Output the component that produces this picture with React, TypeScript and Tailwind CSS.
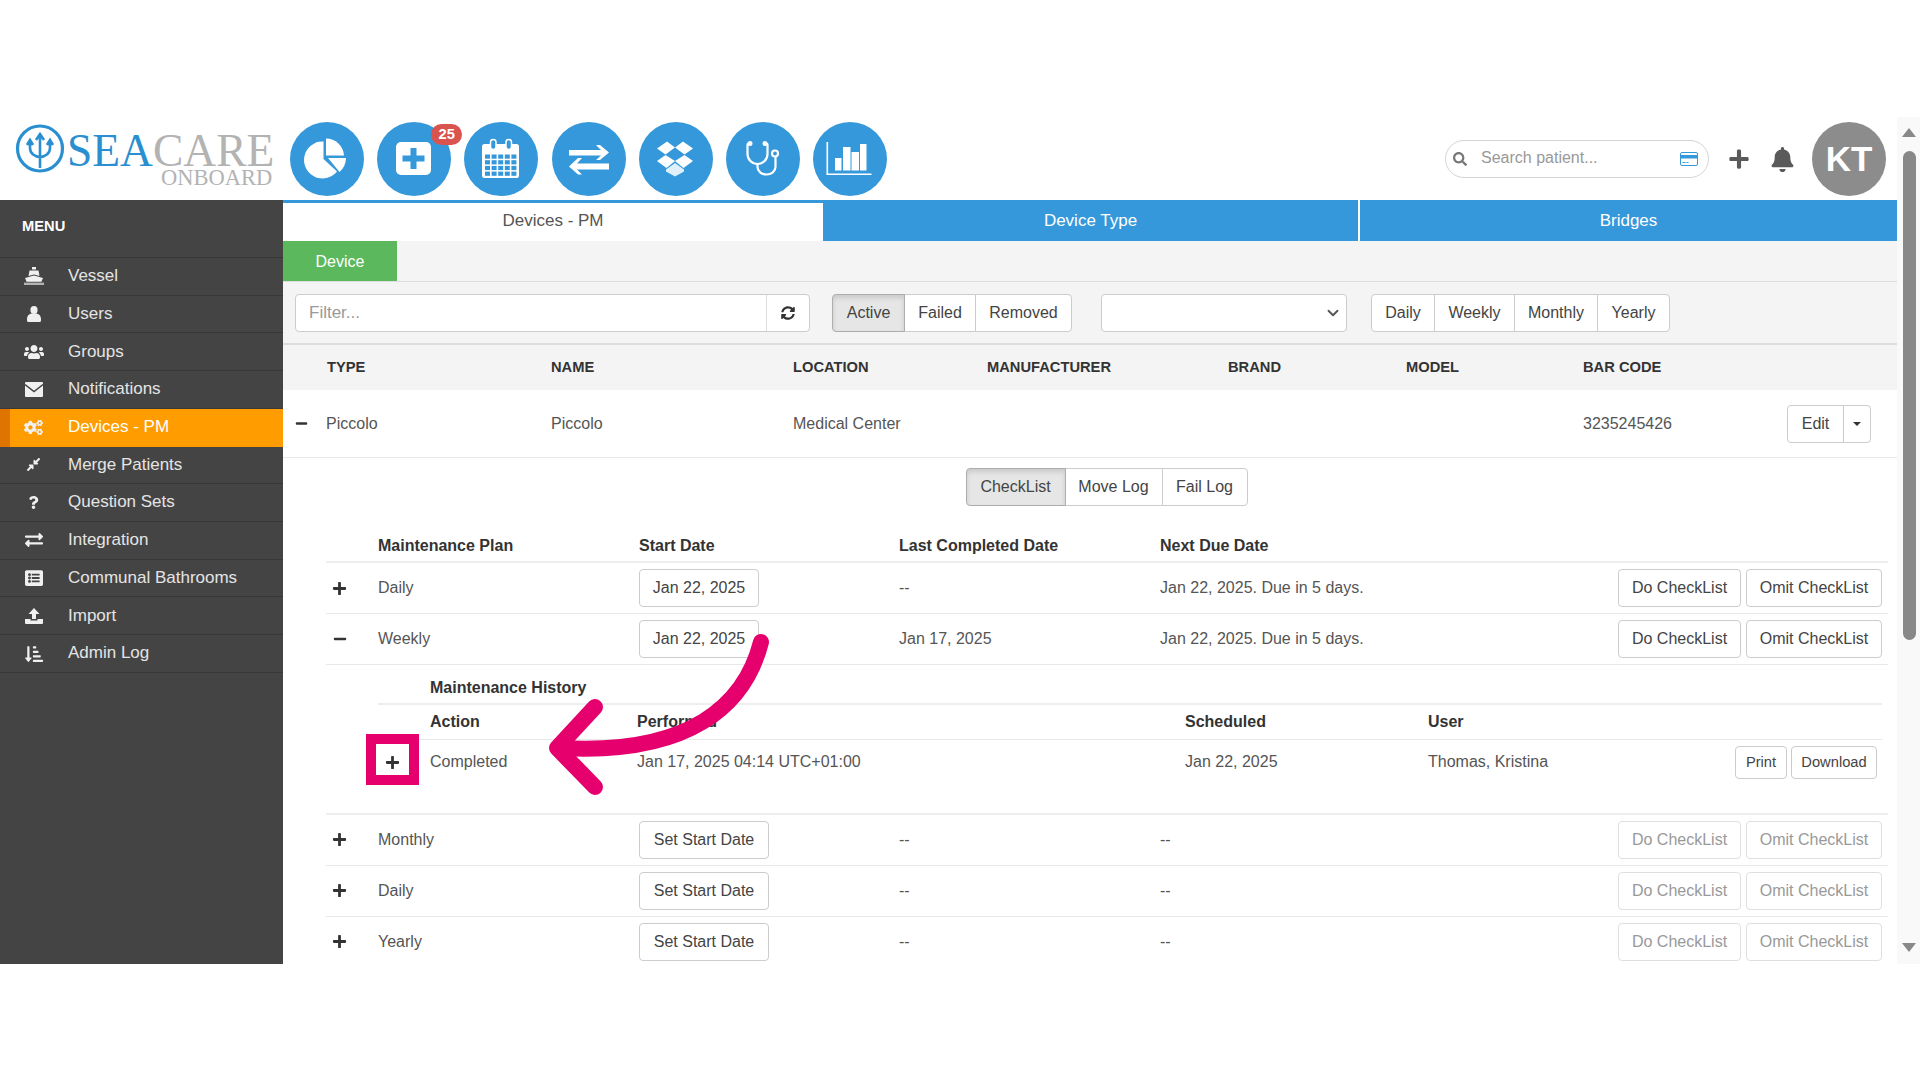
import type { ReactNode } from "react";
import { ChevronDown } from "lucide-react";
import {
  FaBell,
  FaCogs,
  FaCompressAlt,
  FaExchangeAlt,
  FaListAlt,
  FaMinus,
  FaPlus,
  FaQuestion,
  FaSearch,
  FaSortAmountDownAlt,
  FaSyncAlt,
  FaUsers,
} from "react-icons/fa";

function VesselIcon() {
  return (
    <svg width="20" height="18" viewBox="0 0 20 18" fill="currentColor">
      <path d="M8 0h4v2.5H8zM5.5 3.5h9l1 5.5-5.5-1.6L4.5 9z" />
      <path d="M10 8.5 19 11l-1.6 3.8H2.6L1 11z" />
      <path d="M0 15.6h20V18H0z" opacity=".65" />
    </svg>
  );
}

function UserIcon() {
  return (
    <svg width="14" height="16" viewBox="0 0 14 16" fill="currentColor">
      <ellipse cx="7" cy="4" rx="3.6" ry="4" />
      <path d="M0 13c0-3 1.800-4.800 4.200-5.400h5.600C12.200 8.200 14 10 14 13v1.500a1.500 1.500 0 0 1-1.500 1.500h-11A1.500 1.500 0 0 1 0 14.500z" />
    </svg>
  );
}

function EnvelopeIcon() {
  return (
    <svg width="18" height="15" viewBox="0 0 18 15">
      <rect width="18" height="15" rx="1" fill="currentColor" />
      <path d="M0 2.500 9 9.500l9-7" fill="none" stroke="#444" strokeWidth="1.500" />
    </svg>
  );
}

function ImportIcon() {
  return (
    <svg width="18" height="16" viewBox="0 0 18 16" fill="currentColor">
      <path d="M9 0l5.500 6H11v5H7V6H3.500z" />
      <path d="M0 11h5.500v1.500h7V11H18v4a1 1 0 0 1-1 1H1a1 1 0 0 1-1-1z" />
    </svg>
  );
}

function PieIcon() {
  return (
    <g fill="#fff">
      <path d="M33.500 19.500V37L47 49.500A18.500 18.500 0 1 1 33.500 19.500Z" />
      <path d="M36 16.500A18 18 0 0 1 54 33.500H36Z" />
      <path d="M38 36H56A19 19 0 0 1 49.500 50Z" />
    </g>
  );
}

function PlusSquareIcon() {
  return (
    <g>
      <rect x="19" y="20" width="35" height="33" rx="5" fill="#fff" />
      <path d="M33.500 26h6v7.500h8v6h-8V47h-6v-7.500h-8v-6h8z" fill="#3498db" />
    </g>
  );
}

function CalendarIcon() {
  const xs = [21, 27.600, 34.200, 40.800, 47.400];
  const ys = [32.500, 38.200, 43.900, 49.600];
  return (
    <g>
      <rect x="18" y="22" width="37" height="34" rx="2.500" fill="#fff" />
      {xs.map((x) =>
        ys.map((y) => <rect key={`${x}-${y}`} x={x} y={y} width="5" height="4.200" fill="#3498db" />),
      )}
      <rect x="26.500" y="17.500" width="5.500" height="10" rx="2.700" fill="#3498db" stroke="#fff" strokeWidth="1.500" />
      <rect x="42" y="17.500" width="5.500" height="10" rx="2.700" fill="#3498db" stroke="#fff" strokeWidth="1.500" />
    </g>
  );
}

function ExchangeIcon() {
  return (
    <g fill="#fff">
      <polygon points="17,28 49,28 44,23 48,23 57,30.500 48,38 44,38 49,33.500 17,33.500" />
      <polygon points="57,41.500 25,41.500 30,36 26,36 17,44.500 26,52.500 30,52.500 25,47.500 57,47.500" />
    </g>
  );
}

function DropboxIcon() {
  return (
    <g fill="#fff">
      <polygon points="18,26.500 28,19.500 36,25.500 26.500,32.500" />
      <polygon points="36,25.500 44,19.500 54,26.500 45.500,32.500" />
      <polygon points="18,39 26.500,33 36,39 27.500,46" />
      <polygon points="36,39 45.500,33 54,39 44.500,46" />
      <polygon points="27,47.500 36,41 45,47.500 45,49.500 36,54.500 27,49.500" opacity=".85" />
    </g>
  );
}

function StethoscopeIcon() {
  return (
    <g fill="none" stroke="#fff" strokeWidth="2.200">
      <path d="M24 21.500h-1.500a1 1 0 0 0-1 1V32a10 10 0 0 0 20 0v-9.500a1 1 0 0 0-1-1H39" />
      <path d="M31.500 42v3a9 7.500 0 0 0 18 0V35" />
      <circle cx="49" cy="31.500" r="3" fill="#3498db" />
      <circle cx="24" cy="21.500" r="1.400" fill="#fff" />
      <circle cx="39" cy="21.500" r="1.400" fill="#fff" />
    </g>
  );
}

function BarsIcon() {
  return (
    <g fill="#fff">
      <path d="M13.500 20h1.600v31.400h43.400V53h-45z" />
      <rect x="22" y="36" width="6.500" height="12.500" />
      <rect x="30" y="25" width="7.500" height="23.500" />
      <rect x="38.500" y="30" width="7.500" height="18.500" />
      <rect x="47" y="22" width="6.500" height="26.500" />
    </g>
  );
}

function RoundIcon({ children, badge }: { children: ReactNode; badge?: string }) {
  return (
    <div className="relative h-[74px] w-[74px] rounded-full bg-[#3498db]">
      <svg width="74" height="74" viewBox="0 0 74 74">
        {children}
      </svg>
      {badge && (
        <span className="absolute left-[54px] top-[2px] flex h-[21px] w-[31px] items-center justify-center rounded-full bg-[#d9534f] text-[14.700px] font-bold text-white">
          {badge}
        </span>
      )}
    </div>
  );
}

function Logo() {
  return (
    <svg width="290" height="80" viewBox="0 0 290 80" className="shrink-0">
      <g transform="translate(0 -117)">
        <circle cx="40" cy="148.500" r="22.500" fill="none" stroke="#2a8fd0" strokeWidth="3.200" />
        <path
          d="M40 135v33M36 140l4-6 4 6M30 142v6c0 5.500 5 9 10 9s10-3.500 10-9v-6M27 145l3-5 3 5M47 145l3-5 3 5"
          fill="none"
          stroke="#2a8fd0"
          strokeWidth="2.600"
        />
        <text x="67" y="165.500" fontFamily="'Liberation Serif', serif" fontSize="45.500" fill="#b3b3b3">
          <tspan fill="#2a8fd0">SEA</tspan>
          CARE
        </text>
        <text x="161" y="185" fontFamily="'Liberation Serif', serif" fontSize="22.500" fill="#b3b3b3">
          ONBOARD
        </text>
      </g>
    </svg>
  );
}

const menu = [
  { label: "Vessel", icon: <VesselIcon /> },
  { label: "Users", icon: <UserIcon /> },
  { label: "Groups", icon: <FaUsers size={20} /> },
  { label: "Notifications", icon: <EnvelopeIcon /> },
  { label: "Devices - PM", icon: <FaCogs size={19} />, active: true },
  { label: "Merge Patients", icon: <FaCompressAlt size={15} /> },
  { label: "Question Sets", icon: <FaQuestion size={13} /> },
  { label: "Integration", icon: <FaExchangeAlt size={18} /> },
  { label: "Communal Bathrooms", icon: <FaListAlt size={18} /> },
  { label: "Import", icon: <ImportIcon /> },
  { label: "Admin Log", icon: <FaSortAmountDownAlt size={18} /> },
];

function Sidebar() {
  return (
    <aside className="h-full w-[283px] shrink-0 bg-[#444444] text-[17px]">
      <div className="flex h-[58px] items-start border-b border-[#383838] pl-[22px] pt-[17px] text-[14.700px] font-bold leading-[18px] text-white">
        MENU
      </div>
      {menu.map((item) => (
        <div
          key={item.label}
          className={
            item.active
              ? "flex h-[37.730px] items-center border-l-[10px] border-[#e07400] bg-[#ff9c00] text-white"
              : "flex h-[37.730px] items-center border-b border-[#383838] pl-[10px] text-[#e4e4e4]"
          }
        >
          <span className="flex w-[48px] items-center justify-center pr-[1px] text-[#f0f0f0]">{item.icon}</span>
          <span className="pl-[10px] pb-[1px]">{item.label}</span>
        </div>
      ))}
    </aside>
  );
}

function Btn({
  children,
  className = "",
  disabled,
  small,
}: {
  children: ReactNode;
  className?: string;
  disabled?: boolean;
  small?: boolean;
}) {
  return (
    <div
      className={`flex shrink-0 items-center justify-center rounded-[4px] border bg-white ${
        small ? "h-[33px] text-[14.700px]" : "h-[38px] text-[16px]"
      } ${disabled ? "border-[#dfdfdf] text-[#999999]" : "border-[#cccccc] text-[#444444]"} ${className}`}
    >
      {children}
    </div>
  );
}

function Group({ items, active, widths }: { items: string[]; active?: number; widths: string[] }) {
  return (
    <div className="flex h-[38px] shrink-0 text-[16px] text-[#444444]">
      {items.map((label, i) => (
        <div
          key={label}
          className={`flex items-center justify-center border ${widths[i]} ${i > 0 ? "-ml-px" : ""} ${
            i === 0 ? "rounded-l-[4px]" : ""
          } ${i === items.length - 1 ? "rounded-r-[4px]" : ""} ${
            active === i
              ? "relative z-10 border-[#adadad] bg-[#e6e6e6] shadow-[inset_0_3px_5px_rgba(0,0,0,0.125)]"
              : "border-[#cccccc] bg-white"
          }`}
        >
          {label}
        </div>
      ))}
    </div>
  );
}

function Toolbar() {
  return (
    <div className="flex h-[63px] items-start border-b-[2px] border-[#dddddd] bg-[#f4f4f4] pl-[12px] pt-[12px]">
      <div className="flex h-[38px] w-[515px] shrink-0 rounded-[4px] border border-[#cccccc] bg-white text-[17px] text-[#999999]">
        <div className="flex flex-1 items-center pl-[13px]">Filter...</div>
        <div className="flex w-[43px] items-center justify-center border-l border-[#dddddd] text-[#333333]">
          <FaSyncAlt size={14} />
        </div>
      </div>
      <div className="ml-[22px]">
        <Group
          items={["Active", "Failed", "Removed"]}
          active={0}
          widths={["w-[73px]", "w-[72px]", "w-[97px]"]}
        />
      </div>
      <div className="ml-[29px] flex h-[38px] w-[246px] shrink-0 items-center justify-end rounded-[4px] border border-[#cccccc] bg-white pr-[4px]">
        <ChevronDown size={18} strokeWidth={2.500} className="text-[#555555]" />
      </div>
      <div className="ml-[24px]">
        <Group
          items={["Daily", "Weekly", "Monthly", "Yearly"]}
          widths={["w-[64px]", "w-[81px]", "w-[84px]", "w-[73px]"]}
        />
      </div>
    </div>
  );
}

const columns = [
  { label: "TYPE", w: "w-[224px]" },
  { label: "NAME", w: "w-[242px]" },
  { label: "LOCATION", w: "w-[194px]" },
  { label: "MANUFACTURER", w: "w-[241px]" },
  { label: "BRAND", w: "w-[178px]" },
  { label: "MODEL", w: "w-[177px]" },
  { label: "BAR CODE", w: "" },
];

function DeviceTable() {
  return (
    <>
      <div className="flex h-[45px] items-center bg-[#f4f4f4] pl-[44px] text-[14.700px] font-bold text-[#333333]">
        {columns.map((c) => (
          <div key={c.label} className={c.w}>
            {c.label}
          </div>
        ))}
      </div>
      <div className="flex h-[68px] items-center border-b border-[#e8e8e8] text-[16px] text-[#555555]">
        <div className="flex w-[43px] justify-start pl-[12px] text-[#333333]">
          <FaMinus size={13} />
        </div>
        <div className="w-[225px]">Piccolo</div>
        <div className="w-[242px]">Piccolo</div>
        <div className="w-[790px]">Medical Center</div>
        <div className="w-[204px]">3235245426</div>
        <div className="flex">
          <Btn className="w-[57px] rounded-r-none">Edit</Btn>
          <Btn className="-ml-px w-[28px] rounded-l-none">
            <span className="h-0 w-0 border-x-[4px] border-t-[4px] border-x-transparent border-t-[#333333]" />
          </Btn>
        </div>
      </div>
    </>
  );
}

function PlanButtons({ disabled }: { disabled?: boolean }) {
  return (
    <div className="ml-auto flex gap-[5px] pr-[6px]">
      <Btn disabled={disabled} className="w-[123px]">
        Do CheckList
      </Btn>
      <Btn disabled={disabled} className="w-[136px]">
        Omit CheckList
      </Btn>
    </div>
  );
}

function PlanRow({
  name,
  start,
  last,
  next,
  open,
}: {
  name: string;
  start?: string;
  last: string;
  next: string;
  open?: boolean;
}) {
  return (
    <div className="flex h-[51px] shrink-0 items-center border-b border-[#e8e8e8] text-[16px] text-[#555555]">
      <div className="flex w-[52px] pl-[6px] text-[#333333]">
        {open ? <FaMinus size={14} className="ml-[1px]" /> : <FaPlus size={15} />}
      </div>
      <div className="w-[261px]">{name}</div>
      <div className="w-[260px]">
        {start ? <Btn className="w-[120px]">{start}</Btn> : <Btn className="w-[130px]">Set Start Date</Btn>}
      </div>
      <div className="w-[261px]">{last}</div>
      <div>{next}</div>
      <PlanButtons disabled={!start} />
    </div>
  );
}

function History() {
  return (
    <div className="flex h-[149.500px] shrink-0 flex-col border-b-[2px] border-[#eeeeee] pl-[52px] pr-[6px] text-[16px]">
      <div className="flex h-[40px] shrink-0 items-end border-b-[2px] border-[#eeeeee] pb-[3px] pl-[52px] font-bold text-[#333333]">
        Maintenance History
      </div>
      <div className="flex h-[35px] shrink-0 items-center border-b border-[#e8e8e8] pl-[52px] font-bold text-[#333333]">
        <div className="w-[207px]">Action</div>
        <div className="w-[548px]">Performed</div>
        <div className="w-[243px]">Scheduled</div>
        <div>User</div>
      </div>
      <div className="flex h-[44px] shrink-0 items-center text-[#555555]">
        <div className="flex w-[52px] pl-[7px] text-[#333333]">
          <FaPlus size={15} />
        </div>
        <div className="w-[207px]">Completed</div>
        <div className="w-[548px]">Jan 17, 2025 04:14 UTC+01:00</div>
        <div className="w-[243px]">Jan 22, 2025</div>
        <div>Thomas, Kristina</div>
        <div className="ml-auto flex gap-[4px] pr-[5px]">
          <Btn small className="w-[52px]">
            Print
          </Btn>
          <Btn small className="w-[86px]">
            Download
          </Btn>
        </div>
      </div>
    </div>
  );
}

function Checklist() {
  return (
    <div className="pl-[43px] pr-[9px]">
      <div className="flex h-[48px] shrink-0 justify-center pr-[9px] pt-[10px]">
        <div className="ml-[8px]">
          <Group
            items={["CheckList", "Move Log", "Fail Log"]}
            active={0}
            widths={["w-[100px]", "w-[98px]", "w-[86px]"]}
          />
        </div>
      </div>
      <div className="flex h-[57px] items-end border-b-[2px] border-[#eeeeee] pb-[3px] text-[16px] font-bold text-[#333333]">
        <div className="w-[52px]" />
        <div className="w-[261px]">Maintenance Plan</div>
        <div className="w-[260px]">Start Date</div>
        <div className="w-[261px]">Last Completed Date</div>
        <div>Next Due Date</div>
      </div>
      <PlanRow name="Daily" start="Jan 22, 2025" last="--" next="Jan 22, 2025. Due in 5 days." />
      <PlanRow name="Weekly" start="Jan 22, 2025" last="Jan 17, 2025" next="Jan 22, 2025. Due in 5 days." open />
      <History />
      <PlanRow name="Monthly" last="--" next="--" />
      <PlanRow name="Daily" last="--" next="--" />
      <PlanRow name="Yearly" last="--" next="--" />
    </div>
  );
}

function Main() {
  return (
    <main className="h-full w-[1614px] overflow-hidden bg-white">
      <div className="flex h-[41px] text-[17px] text-white">
        <div className="flex w-[540px] items-center justify-center border-t-[3px] border-[#3498db] pb-[2px] text-[#555555]">
          Devices - PM
        </div>
        <div className="flex w-[535px] items-center justify-center bg-[#3498db]">Device Type</div>
        <div className="w-[2px]" />
        <div className="flex flex-1 items-center justify-center bg-[#3498db]">Bridges</div>
      </div>
      <div className="flex h-[41px] border-b border-[#dddddd] bg-[#f4f4f4]">
        <div className="flex w-[114px] items-center justify-center bg-[#5cb85c] pt-[1px] text-[16px] text-white">
          Device
        </div>
      </div>
      <Toolbar />
      <DeviceTable />
      <Checklist />
    </main>
  );
}

function Header() {
  return (
    <header className="flex h-[83px] items-start pt-[5px]">
      <div className="-mt-[5px]">
        <Logo />
      </div>
      <div className="flex gap-[13.200px]">
        <RoundIcon>
          <PieIcon />
        </RoundIcon>
        <RoundIcon badge="25">
          <PlusSquareIcon />
        </RoundIcon>
        <RoundIcon>
          <CalendarIcon />
        </RoundIcon>
        <RoundIcon>
          <ExchangeIcon />
        </RoundIcon>
        <RoundIcon>
          <DropboxIcon />
        </RoundIcon>
        <RoundIcon>
          <StethoscopeIcon />
        </RoundIcon>
        <RoundIcon>
          <BarsIcon />
        </RoundIcon>
      </div>
      <div className="ml-auto flex items-center pr-[11px]">
        <div className="flex h-[38px] w-[264px] items-center rounded-full border border-[#d5d5d5] bg-white pl-[7px] pr-[10px] text-[16px] text-[#999999]">
          <FaSearch size={14} className="text-[#777777]" />
          <span className="ml-[14px] pb-[2px]">Search patient...</span>
          <svg width="18" height="14" viewBox="0 0 18 14" className="ml-auto">
            <rect x="0.500" y="0.500" width="17" height="13" rx="1.500" fill="#fff" stroke="#3498db" />
            <rect x="0" y="3" width="18" height="3.500" fill="#3498db" />
            <path d="M2.500 10.500h3m1 0h2" stroke="#3498db" />
          </svg>
        </div>
        <FaPlus size={22} className="ml-[19px] text-[#5a5a5a]" />
        <FaBell size={25} className="ml-[20px] text-[#5a5a5a]" />
        <div className="ml-[17px] flex h-[74px] w-[74px] items-center justify-center rounded-full bg-[#8c8c8c] text-[35px] font-bold text-white">
          KT
        </div>
      </div>
    </header>
  );
}

function Scrollbar() {
  return (
    <div className="flex h-[847px] w-[23px] shrink-0 flex-col items-center bg-[#f9f9f9] pl-[1px]">
      <div className="mt-[11px] h-0 w-0 border-x-[7px] border-b-[9px] border-x-transparent border-b-[#888888]" />
      <div className="mt-[14px] h-[489px] w-[13px] rounded-full bg-[#888888]" />
      <div className="mt-auto mb-[12px] h-0 w-0 border-x-[7px] border-t-[9px] border-x-transparent border-t-[#888888]" />
    </div>
  );
}

function Annotation() {
  return (
    <>
      <div className="pointer-events-none absolute left-[366px] top-[734px] h-[51px] w-[53px] border-[10px] border-[#e5006d]" />
      <svg width="1920" height="1080" className="pointer-events-none absolute left-0 top-0">
        <path
          d="M761 642C745 705 690 755 562 748"
          fill="none"
          stroke="#e5006d"
          strokeWidth="16"
          strokeLinecap="round"
        />
        <path
          d="M595 707 557 748 595 787"
          fill="none"
          stroke="#e5006d"
          strokeWidth="16"
          strokeLinecap="round"
          strokeLinejoin="round"
        />
      </svg>
    </>
  );
}

export default function App() {
  return (
    <div className="relative h-[1080px] w-[1920px] overflow-hidden bg-white pt-[117px] font-['Liberation_Sans',Arial,sans-serif]">
      <div className="flex">
        <div className="w-[1897px]">
          <Header />
          <div className="flex h-[764px]">
            <Sidebar />
            <Main />
          </div>
        </div>
        <Scrollbar />
      </div>
      <Annotation />
    </div>
  );
}
